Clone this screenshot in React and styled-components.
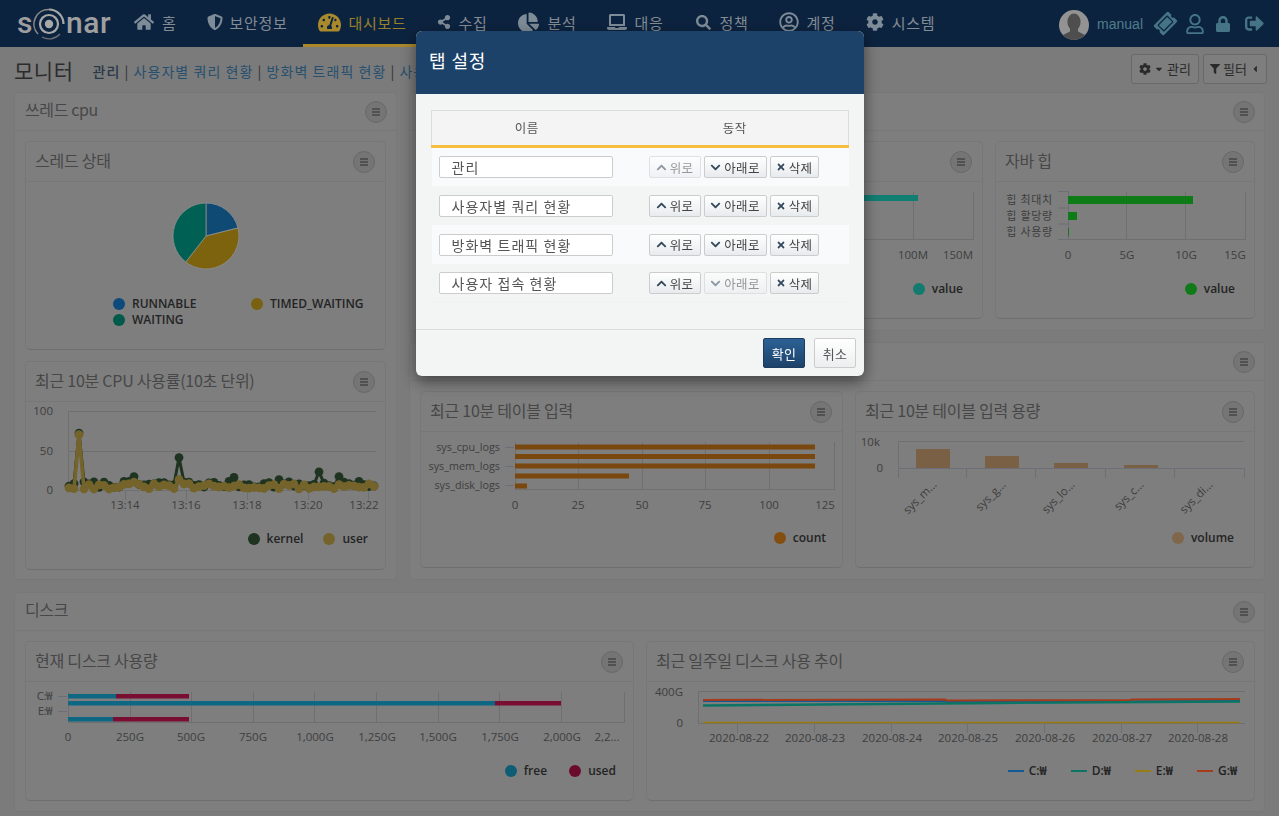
import React from 'react';
import styled, { createGlobalStyle } from 'styled-components';
import {
  FaHome, FaShieldAlt, FaTachometerAlt, FaShareAlt, FaChartPie, FaLaptop, FaSearch,
  FaRegUserCircle, FaCog, FaTicketAlt, FaRegUser, FaLock, FaSignOutAlt, FaFilter,
  FaCaretDown, FaCaretLeft, FaChevronUp, FaChevronDown, FaTimes,
} from 'react-icons/fa';

const ALPHA = 0.25;
// colours are given as they appear under the backdrop
const L = (hex) => {
  const n = parseInt(hex.slice(1), 16);
  const c = [n >> 16, (n >> 8) & 255, n & 255].map((v) => Math.min(255, Math.round(v / (1 - ALPHA))));
  return `rgb(${c[0]},${c[1]},${c[2]})`;
};
const KR = `"Noto Sans CJK KR", "Liberation Sans", sans-serif`;
const LAT = `"Open Sans", "Noto Sans CJK KR", sans-serif`;

const Global = createGlobalStyle`
  html, body { margin: 0; padding: 0; height: 816px; overflow: hidden; background: ${L('#7b7b7b')}; }
  * { box-sizing: border-box; }
  body { font-family: ${KR}; }
`;

const Page = styled.div`width: 1279px; height: 816px; display: flex; flex-direction: column;`;
const Header = styled.header`
  height: 47px; background: ${L('#0d2340')}; display: flex; align-items: stretch; padding-left: 17px; flex: none;
`;
const Logo = styled.div`
  width: 102px; display: flex; align-items: center; font: 500 30px/1 Roboto, sans-serif; color: ${L('#a0a0a0')};
  letter-spacing: .6px; margin-top: -1px;
`;
const Nav = styled.nav`display: flex; align-items: stretch;`;
const NavItem = styled.a`
  display: flex; align-items: center; gap: ${(p) => p.$gap ?? 8}px; padding: 0 15px; height: 47px;
  font-size: 15px; letter-spacing: 0.7px; color: ${(p) => (p.$active ? L('#98802a') : L('#848c94'))};
  border-bottom: 3px solid ${(p) => (p.$active ? L('#ab882a') : 'transparent')};
  svg { color: ${(p) => (p.$active ? L('#a98a2c') : L('#7f8c98'))}; flex: none; margin-left: ${(p) => p.$iconShift ?? 0}px; }
`;
const UserBox = styled.div`
  margin-left: auto; display: flex; align-items: center; padding-right: 15px; color: ${L('#457486')};
`;
const UserName = styled.span`font: 14px "Liberation Sans", sans-serif; margin: 0 12px 0 8px; color: ${L('#517c8c')};`;
const HeadIcon = styled.span`display: flex; margin-left: ${(p) => p.$ml}px;`;

const TitleRow = styled.div`height: 45px; display: flex; align-items: center; padding: 0 12px 0 14px; flex: none;`;
const PageTitle = styled.h1`margin: 0 19px 0 0; font: 400 21px ${KR}; color: ${L('#2c2c2c')}; letter-spacing: .5px;`;
const Tabs = styled.div`font-size: 14px; letter-spacing: 1.05px; color: ${L('#27506e')}; margin-top: 3px; white-space: nowrap;`;
const Sep = styled.span`color: ${L('#333333')};`;
const ActiveTab = styled.span`color: ${L('#2a3a48')}; font-weight: 500;`;
const TopButtons = styled.div`margin-left: auto; display: flex; gap: 4px; margin-top: -2px;`;
const TopButton = styled.button`
  height: 30px; width: ${(p) => p.$w}px; border: 1px solid ${L('#696969')}; border-radius: 3px; background: ${L('#7e7e7e')};
  display: flex; align-items: center; justify-content: center; gap: 3px; color: ${L('#2b2b2b')}; font: 13px ${KR}; padding: 0;
`;

const Content = styled.main`
  display: grid; grid-template-columns: 383px 856px; column-gap: 12px; row-gap: 12px; padding: 0 14px; align-content: start;
`;
const RightStack = styled.div`display: flex; flex-direction: column; gap: 11px;`;
const Section = styled.section`
  height: ${(p) => p.$h}px; background: ${L('#7f7f7f')}; border: 1px solid ${L('#787878')}; border-radius: 4px;
  grid-column: ${(p) => p.$span || 'auto'}; display: flex; flex-direction: column;
`;
const SectionHead = styled.div`
  height: 38px; flex: none; display: flex; justify-content: space-between; padding: 8px 9px 0 10px; border-bottom: 1px solid ${L('#797979')};
`;
const SectionTitle = styled.h2`margin: 0; font: 400 16px/17px ${KR}; color: ${L('#474747')}; letter-spacing: -.4px;`;
const SectionBody = styled.div`
  padding: 10px; display: grid; grid-template-columns: ${(p) => p.$cols}; gap: 11px 12px;
`;
const Card = styled.article`
  height: ${(p) => p.$h}px; background: ${L('#7e7e7e')}; border: 1px solid ${L('#777777')}; border-bottom-color: ${L('#6e6e6e')};
  border-radius: 5px; display: flex; flex-direction: column; overflow: hidden; min-width: 0;
`;
const CardHead = styled.div`
  height: 40px; flex: none; display: flex; justify-content: space-between; padding: 9px 10px 0 9px; border-bottom: 1px solid ${L('#777777')};
`;
const CardTitle = styled.h3`margin: 0; font: 400 16px/19px ${KR}; color: ${L('#474747')}; letter-spacing: -.25px; white-space: nowrap;`;
const MenuBtn = styled.button`
  width: 22px; height: 22px; border-radius: 50%; border: 1px solid ${L('#686868')}; background: ${L('#767676')}; padding: 0;
  display: flex; align-items: center; justify-content: center; flex: none; color: ${L('#2d2d2d')};
`;
const Chart = styled.svg`display: block; flex: none; font-family: ${LAT}; font-size: 11.5px;`;
const Legend = styled.div`
  margin-top: auto; display: flex; justify-content: flex-end; gap: ${(p) => p.$gap ?? 20}px;
  padding: 0 ${(p) => p.$pr ?? 17}px ${(p) => p.$pb ?? 21}px 0;
  font: 600 12px/16px ${LAT}; color: ${L('#242424')};
`;
const PieLegend = styled.div`
  display: grid; grid-template-columns: 138px auto; padding-left: 87px; margin-top: 8px; row-gap: 0;
  font: 600 12px/16px ${LAT}; color: ${L('#242424')};
`;
const LegendItem = styled.span`display: inline-flex; align-items: center; gap: ${(p) => p.$gap ?? 7}px;`;
const Dot = styled.i`width: 12px; height: 12px; border-radius: 50%; background: ${(p) => p.$c}; flex: none;`;
const Dash = styled.i`width: 16px; height: 2px; background: ${(p) => p.$c}; flex: none;`;

const Backdrop = styled.div`position: fixed; inset: 0; background: rgba(0,0,0,${ALPHA}); z-index: 10;`;
const Modal = styled.div`
  position: absolute; left: 416px; top: 31px; width: 448px; height: 345px; background: #f3f5f5; border-radius: 6px; overflow: hidden;
  box-shadow: 0 5px 15px rgba(0,0,0,.5); display: flex; flex-direction: column;
`;
const ModalHead = styled.div`
  height: 63px; flex: none; background: #1d4269; color: #fff; font: 400 18px/58px ${KR}; padding-left: 13px; letter-spacing: .9px;
`;
const ModalBody = styled.div`flex: 1; padding: 16px 15px 0;`;
const Table = styled.table`width: 417px; border-collapse: collapse; table-layout: fixed;`;
const Th = styled.th`
  height: 36px; background: #f4f4f4; border-top: 1px solid #ddd; border-bottom: 3px solid #f7bf40; font: 400 12.5px ${KR}; color: #555; letter-spacing: .6px;
  width: ${(p) => p.$w}px; padding: 0 0 2px;
  &:first-child { border-left: 1px solid #ddd; } &:last-child { border-right: 1px solid #ddd; }
`;
const Tr = styled.tr`
  height: 39px; background: ${(p) => (p.$odd ? '#f9fafc' : 'transparent')};
  &:last-child { border-bottom: 1px solid #f0f2f2; }
`;
const Td = styled.td`padding: 1px 0 0 ${(p) => p.$pl}px;`;
const NameInput = styled.input`
  display: block; width: 174px; height: 22px; border: 1px solid #ccc; border-radius: 2px; background: #fff; padding: 0 0 0 12px; outline: 0;
  font: 400 14px ${KR}; letter-spacing: 1.05px; color: #555;
`;
const ActionRow = styled.div`display: flex; gap: 3px; width: 171px;`;
const Action = styled.button`
  height: 22px; width: ${(p) => p.$w}px; flex: none; border: 1px solid #ccc; border-radius: 2px; background: linear-gradient(#fff, #e8ebee);
  display: flex; align-items: center; justify-content: center; gap: 3px; padding: 0; font: 400 12.5px ${KR}; letter-spacing: .3px; color: #444;
  opacity: ${(p) => (p.disabled ? 0.55 : 1)};
  svg { color: #33475b; }
`;
const ModalFoot = styled.div`
  height: 47px; flex: none; border-top: 1px solid #ddd; display: flex; justify-content: flex-end; gap: 9px; padding: 8px 8px 0 0;
`;
const FootBtn = styled.button`
  width: 42px; height: 30px; border-radius: 2px; padding: 0; font: 400 13px ${KR}; letter-spacing: .4px;
  border: 1px solid ${(p) => (p.$primary ? '#1d3c60' : '#ccc')};
  color: ${(p) => (p.$primary ? '#fff' : '#555')};
  background: ${(p) => (p.$primary ? 'linear-gradient(#2c6195,#1d4269)' : 'linear-gradient(#fff,#eceeef)')};
`;

const Bars = () => (
  <svg width="12" height="12" viewBox="0 0 12 12"><path d="M2 3h8M2 6h8M2 9h8" stroke="currentColor" strokeWidth="1.2" /></svg>
);
const Menu = () => <MenuBtn aria-label="menu"><Bars /></MenuBtn>;

const Box = ({ x, y, w, h, children }) => (
  <Chart width={w} height={h} viewBox={`${x} ${y} ${w} ${h}`}>{children}</Chart>
);
const AX = L('#6c6f76');
const GR = L('#6f6f6f');
const TX = L('#3f3f3f');
const VLines = ({ xs, y1, y2, c = GR }) => xs.map((x) => <line key={x} x1={x + .5} x2={x + .5} y1={y1} y2={y2} stroke={c} />);
const Rect = ({ x1, x2, y, h, c }) => <rect x={x1} y={y} width={x2 - x1} height={h} fill={c} />;
const T = ({ x, y, a = 'middle', children, ...r }) => <text x={x} y={y} textAnchor={a} fill={TX} {...r}>{children}</text>;

const polar = (deg, r = 33, cx = 206, cy = 235) => {
  const t = (deg - 90) * Math.PI / 180;
  return `${(cx + r * Math.cos(t)).toFixed(1)} ${(cy + r * Math.sin(t)).toFixed(1)}`;
};
const Slice = ({ a, b, c }) => (
  <path d={`M206 235L${polar(a)}A33 33 0 ${b - a > 180 ? 1 : 0} 1 ${polar(b)}Z`} fill={c} stroke={L('#8f8f8f')} strokeWidth=".8" />
);

const PieChart = () => (
  <Box x={26} y={181} w={359} h={106}>
    <Slice a={0} b={76} c={L('#0f4a75')} />
    <Slice a={76} b={218} c={L('#7f640f')} />
    <Slice a={218} b={360} c={L('#006053')} />
  </Box>
);

const rng = (s) => () => { s = (s * 1664525 + 1013904223) % 4294967296; return s / 4294967296; };
const series = (seed, base, amp, peaks) => {
  const r = rng(seed);
  return Array.from({ length: 62 }, (_, i) => {
    const x = 69 + i * 5;
    const v = peaks[i] ?? base + r() * amp;
    return [x, +(490 - v * 0.79).toFixed(1)];
  });
};
const KERNEL = series(7, 3, 8, { 1: 8, 2: 72, 13: 17, 23: 10, 22: 41, 33: 16, 50: 23, 54: 17, 42: 13 });
const USER = series(31, 1, 7, { 2: 70, 22: 13, 13: 10 });
const Line = ({ pts, c, r, w }) => (
  <g>
    <polyline points={pts.map((p) => p.join(',')).join(' ')} fill="none" stroke={c} strokeWidth={w} strokeLinejoin="round" />
    {pts.map(([x, y]) => <circle key={x} cx={x} cy={y} r={r} fill={c} />)}
  </g>
);
const CpuChart = () => (
  <Box x={26} y={402} w={359} h={112}>
    <g stroke={GR}>
      <line x1={68} x2={376} y1={411.5} y2={411.5} /><line x1={68} x2={376} y1={451.5} y2={451.5} /><line x1={68} x2={376} y1={490.5} y2={490.5} />
      <line x1={68.5} x2={68.5} y1={411} y2={490} />
    </g>
    <VLines xs={[125, 186, 247, 308, 368]} y1={490} y2={500} c={AX} />
    <T x={53} y={415} a="end">100</T><T x={53} y={455} a="end">50</T><T x={53} y={494} a="end">0</T>
    {[[125, '13:14'], [186, '13:16'], [247, '13:18'], [308, '13:20'], [364, '13:22']].map(([x, l]) => <T key={l} x={x} y={509}>{l}</T>)}
    <Line pts={KERNEL} c={L('#1f3320')} r={4.4} w={3} />
    <Line pts={USER} c={L('#74632a')} r={4.4} w={3.6} />
  </Box>
);

const TableChart = () => (
  <Box x={421} y={432} w={421} h={80}>
    <VLines xs={[515, 578, 642, 705, 769, 834]} y1={442} y2={490} />
    <line x1={515} x2={834} y1={489.5} y2={489.5} stroke={GR} />
    {[[447, 815], [456.5, 815], [466, 815], [476, 629], [486, 527]].map(([y, e]) => (
      <Rect key={y} x1={515} x2={e} y={y - 2.5} h={5} c={L('#7a470e')} />
    ))}
    {[[447, 'sys_cpu_logs'], [466, 'sys_mem_logs'], [485, 'sys_disk_logs']].map(([y, l]) => (
      <g key={l}><T x={500} y={y + 4} a="end" fontSize="10.8">{l}</T><line x1={505} x2={514} y1={y + .5} y2={y + .5} stroke={AX} /></g>
    ))}
    {[[515, '0'], [578, '25'], [642, '50'], [705, '75'], [769, '100'], [825, '125']].map(([x, l]) => <T key={l} x={x} y={509}>{l}</T>)}
  </Box>
);

const VolumeChart = () => (
  <Box x={856} y={432} w={398} h={84}>
    <line x1={898} x2={1244} y1={441.5} y2={441.5} stroke={GR} />
    <line x1={898.5} x2={898.5} y1={441} y2={468} stroke={GR} />
    <line x1={898} x2={1245} y1={468.5} y2={468.5} stroke={AX} />
    <VLines xs={[898, 966, 1035, 1105, 1174, 1244]} y1={468} y2={478} c={AX} />
    {[[916, 449], [985, 456], [1054, 463], [1124, 465]].map(([x, y]) => (
      <rect key={x} x={x} y={y} width={34} height={468 - y} fill={L('#7a6144')} />
    ))}
    <T x={880} y={446} a="end" >10k</T><T x={883} y={472} a="end">0</T>
    {[[936, 'sys_m...'], [1005, 'sys_g...'], [1074, 'sys_lo...'], [1143, 'sys_c...'], [1212, 'sys_di...']].map(([x, l]) => (
      <T key={l} x={x} y={486} a="end" transform={`rotate(-45 ${x} 484)`}>{l}</T>
    ))}
  </Box>
);

const MidChart = () => (
  <Box x={724} y={182} w={258} h={84}>
    <VLines xs={[753, 833, 913, 973]} y1={192} y2={240} />
    <line x1={724} x2={973} y1={239.5} y2={239.5} stroke={GR} />
    <Rect x1={740} x2={918} y={195} h={6} c={L('#117e73')} />
    <T x={913} y={259}>100M</T><T x={958} y={259}>150M</T>
  </Box>
);

const HeapChart = () => (
  <Box x={996} y={182} w={258} h={84}>
    <VLines xs={[1126, 1185, 1245]} y1={192} y2={240} />
    <line x1={1058} x2={1245} y1={239.5} y2={239.5} stroke={GR} />
    <line x1={1068.5} x2={1068.5} y1={191} y2={240} stroke={AX} />
    {[191.5, 208, 224, 239.5].map((y) => <line key={y} x1={1058} x2={1068} y1={y} y2={y} stroke={AX} />)}
    <Rect x1={1068} x2={1193} y={196} h={8} c={L('#107a19')} />
    <Rect x1={1068} x2={1077} y={212} h={8} c={L('#107a19')} />
    <Rect x1={1068} x2={1069} y={228} h={8} c={L('#107a19')} />
    {[[204, '힙 최대치'], [220, '힙 할당량'], [236, '힙 사용량']].map(([y, l]) => (
      <T key={l} x={1053} y={y} a="end" fontFamily={KR} fontSize="11" letterSpacing=".75">{l}</T>
    ))}
    {[[1068, '0'], [1127, '5G'], [1186, '10G'], [1235, '15G']].map(([x, l]) => <T key={l} x={x} y={259}>{l}</T>)}
  </Box>
);

const DiskBar = ({ y, a, b }) => (
  <g><Rect x1={68} x2={a} y={y} h={4.5} c={L('#0e6884')} /><Rect x1={a} x2={b} y={y} h={4.5} c={L('#7a0e32')} /></g>
);
const DiskChart = () => (
  <Box x={26} y={682} w={607} h={62}>
    <VLines xs={[68, 130, 191, 253, 314, 376, 438, 499, 561, 624]} y1={692} y2={723} />
    <line x1={68} x2={625} y1={722.5} y2={722.5} stroke={GR} />
    <DiskBar y={694} a={116} b={189} /><DiskBar y={701} a={495} b={561} /><DiskBar y={717} a={113} b={189} />
    <T x={52} y={700} a="end" letterSpacing="-.5">C:₩</T><T x={52} y={715} a="end" letterSpacing="-.5">E:₩</T>
    <line x1={58} x2={67} y1={696.5} y2={696.5} stroke={AX} /><line x1={58} x2={67} y1={711.5} y2={711.5} stroke={AX} />
    {[[68, '0'], [130, '250G'], [191, '500G'], [253, '750G'], [315, '1,000G'], [377, '1,250G'], [438, '1,500G'], [500, '1,750G'], [562, '2,000G'], [607, '2,2...']].map(([x, l]) => (
      <T key={l} x={x} y={741}>{l}</T>
    ))}
  </Box>
);
const TrendChart = () => (
  <Box x={647} y={682} w={607} h={62}>
    <line x1={698} x2={1245} y1={691.5} y2={691.5} stroke={GR} />
    <line x1={698.5} x2={698.5} y1={691} y2={723} stroke={GR} />
    <line x1={698} x2={1245} y1={723.5} y2={723.5} stroke={GR} />
    <VLines xs={[737, 814, 891, 967, 1044, 1121, 1197]} y1={723} y2={733} c={AX} />
    <T x={683} y={696} a="end">400G</T><T x={683} y={727} a="end">0</T>
    {[[739, '22'], [815, '23'], [892, '24'], [968, '25'], [1045, '26'], [1122, '27'], [1198, '28']].map(([x, d]) => (
      <T key={d} x={x} y={742}>{`2020-08-${d}`}</T>
    ))}
    <polyline points="703,701 945,701 947,702 1240,701" fill="none" stroke={L('#135b95')} strokeWidth="2" />
    <polyline points="703,705.5 1000,703 1240,701.5" fill="none" stroke={L('#0d7465')} strokeWidth="2.4" />
    <polyline points="703,722.5 1240,722.5" fill="none" stroke={L('#987c11')} strokeWidth="1.6" />
    <polyline points="703,700 945,699.5 947,700.5 1130,700 1132,699.5 1240,699" fill="none" stroke={L('#a63b1b')} strokeWidth="2" />
  </Box>
);

const LogoMark = () => (
  <svg width="32" height="32" viewBox="0 0 32 32" style={{ margin: '2px 1px 0 0', flex: 'none' }}>
    <circle cx="16" cy="16" r="4.2" fill={L('#a8a8a8')} />
    <circle cx="16" cy="16" r="9" fill="none" stroke={L('#a8a8a8')} strokeWidth="2.2" />
    <path d="M16 1.5A14.5 14.5 0 0 1 30.5 16" fill="none" stroke={L('#a8a8a8')} strokeWidth="2.2" />
    <path d="M5 26A14.5 14.5 0 0 1 16 1.5" fill="none" stroke={L('#8a8a8a')} strokeWidth="1.6" />
    <path d="M27 26A14.5 14.5 0 0 1 9 29" fill="none" stroke={L('#6a6e72')} strokeWidth="1.4" />
  </svg>
);
const Avatar = () => (
  <svg width="30" height="30" viewBox="0 0 30 30" style={{ marginTop: 2 }}>
    <circle cx="15" cy="15" r="15" fill={L('#949494')} />
    <clipPath id="av"><circle cx="15" cy="15" r="15" /></clipPath>
    <g clipPath="url(#av)" fill={L('#4f4f4f')}>
      <ellipse cx="15" cy="12" rx="6.6" ry="8.4" />
      <path d="M11 18h8v3.5l8 4V30H3v-4.5l8-4z" />
    </g>
  </svg>
);

const NAV = [
  { I: FaHome, s: 20, l: '홈' },
  { I: FaShieldAlt, s: 16, l: '보안정보', gap: 7 },
  { I: FaTachometerAlt, s: 23, l: '대시보드', active: true },
  { I: FaShareAlt, s: 14, l: '수집' },
  { I: FaChartPie, s: 21, l: '분석', gap: 9 },
  { I: FaLaptop, s: 20, l: '대응' },
  { I: FaSearch, s: 15, l: '정책', shift: 2, gap: 9 },
  { I: FaRegUserCircle, s: 20, l: '계정' },
  { I: FaCog, s: 18, l: '시스템' },
];
const ROWS = ['관리', '사용자별 쿼리 현황', '방화벽 트래픽 현황', '사용자 접속 현황'];

export default function App() {
  return (
    <>
      <Global />
      <Page>
        <Header>
          <Logo><span>s</span><LogoMark /><span>nar</span></Logo>
          <Nav>
            {NAV.map(({ I, s, l, active, gap, shift }) => (
              <NavItem key={l} $active={active} $gap={gap} $iconShift={shift}><I size={s} />{l}</NavItem>
            ))}
          </Nav>
          <UserBox>
            <Avatar />
            <UserName>manual</UserName>
            <HeadIcon $ml={0}><FaTicketAlt size={21} style={{ transform: 'rotate(-45deg)' }} /></HeadIcon>
            <HeadIcon $ml={9}><FaRegUser size={20} /></HeadIcon>
            <HeadIcon $ml={10}><FaLock size={16} /></HeadIcon>
            <HeadIcon $ml={14}><FaSignOutAlt size={19} /></HeadIcon>
          </UserBox>
        </Header>
        <TitleRow>
          <PageTitle>모니터</PageTitle>
          <Tabs>
            <ActiveTab>관리</ActiveTab> <Sep>|</Sep> 사용자별 쿼리 현황 <Sep>|</Sep> 방화벽 트래픽 현황 <Sep>|</Sep> 사용자 접속 현황
          </Tabs>
          <TopButtons>
            <TopButton $w={68}><FaCog size={12} /><FaCaretDown size={10} />관리</TopButton>
            <TopButton $w={64}><FaFilter size={10} />필터<FaCaretLeft size={10} /></TopButton>
          </TopButtons>
        </TitleRow>
        <Content>
          <Section $h={488}>
            <SectionHead><SectionTitle>쓰레드 cpu</SectionTitle><Menu /></SectionHead>
            <SectionBody $cols="1fr">
              <Card $h={209}>
                <CardHead><CardTitle>스레드 상태</CardTitle><Menu /></CardHead>
                <PieChart />
                <PieLegend>
                  <LegendItem><Dot $c={L('#0e4a7b')} />RUNNABLE</LegendItem>
                  <LegendItem><Dot $c={L('#796212')} />TIMED_WAITING</LegendItem>
                  <LegendItem><Dot $c={L('#005b4a')} />WAITING</LegendItem>
                </PieLegend>
              </Card>
              <Card $h={209}>
                <CardHead><CardTitle>최근 10분 CPU 사용률(10초 단위)</CardTitle><Menu /></CardHead>
                <CpuChart />
                <Legend $pb={22}>
                  <LegendItem><Dot $c={L('#1f3320')} />kernel</LegendItem>
                  <LegendItem><Dot $c={L('#74632a')} />user</LegendItem>
                </Legend>
              </Card>
            </SectionBody>
          </Section>
          <RightStack>
            <Section $h={239}>
              <SectionHead><SectionTitle>자바 메모리</SectionTitle><Menu /></SectionHead>
              <SectionBody $cols="291px 260px 260px">
                <Card $h={178}><CardHead><CardTitle>메모리</CardTitle><Menu /></CardHead></Card>
                <Card $h={178}>
                  <CardHead><CardTitle>논힙</CardTitle><Menu /></CardHead>
                  <MidChart />
                  <Legend $pr={19}><LegendItem><Dot $c={L('#127a6f')} />value</LegendItem></Legend>
                </Card>
                <Card $h={178}>
                  <CardHead><CardTitle>자바 힙</CardTitle><Menu /></CardHead>
                  <HeapChart />
                  <Legend $pr={19}><LegendItem><Dot $c={L('#117a19')} />value</LegendItem></Legend>
                </Card>
              </SectionBody>
            </Section>
            <Section $h={238}>
              <SectionHead><SectionTitle>테이블</SectionTitle><Menu /></SectionHead>
              <SectionBody $cols="423px 400px">
                <Card $h={177}>
                  <CardHead><CardTitle>최근 10분 테이블 입력</CardTitle><Menu /></CardHead>
                  <TableChart />
                  <Legend $pr={16}><LegendItem><Dot $c={L('#844e10')} />count</LegendItem></Legend>
                </Card>
                <Card $h={177}>
                  <CardHead><CardTitle>최근 10분 테이블 입력 용량</CardTitle><Menu /></CardHead>
                  <VolumeChart />
                  <Legend $pr={20}><LegendItem><Dot $c={L('#80674b')} />volume</LegendItem></Legend>
                </Card>
              </SectionBody>
            </Section>
          </RightStack>
          <Section $h={220} $span="1 / -1">
            <SectionHead><SectionTitle>디스크</SectionTitle><Menu /></SectionHead>
            <SectionBody $cols="609px 609px">
              <Card $h={160}>
                <CardHead><CardTitle>현재 디스크 사용량</CardTitle><Menu /></CardHead>
                <DiskChart />
                <Legend $gap={22}>
                  <LegendItem><Dot $c={L('#0f5e75')} />free</LegendItem>
                  <LegendItem><Dot $c={L('#6c0d2c')} />used</LegendItem>
                </Legend>
              </Card>
              <Card $h={160}>
                <CardHead><CardTitle>최근 일주일 디스크 사용 추이</CardTitle><Menu /></CardHead>
                <TrendChart />
                <Legend $gap={24}>
                  <LegendItem $gap={5}><Dash $c={L('#135b95')} />C:₩</LegendItem>
                  <LegendItem $gap={5}><Dash $c={L('#0d7465')} />D:₩</LegendItem>
                  <LegendItem $gap={5}><Dash $c={L('#987c11')} />E:₩</LegendItem>
                  <LegendItem $gap={5}><Dash $c={L('#a63b1b')} />G:₩</LegendItem>
                </Legend>
              </Card>
            </SectionBody>
          </Section>
        </Content>
      </Page>
      <Backdrop>
        <Modal>
          <ModalHead>탭 설정</ModalHead>
          <ModalBody>
            <Table>
              <thead>
                <tr><Th $w={190}>이름</Th><Th $w={227}>동작</Th></tr>
              </thead>
              <tbody>
                {ROWS.map((r, i) => (
                  <Tr key={r} $odd={i % 2 === 0}>
                    <Td $pl={7}><NameInput readOnly value={r} /></Td>
                    <Td $pl={27}>
                      <ActionRow>
                        <Action $w={52} disabled={i === 0}><FaChevronUp size={11} />위로</Action>
                        <Action $w={63} disabled={i === 3}><FaChevronDown size={11} />아래로</Action>
                        <Action $w={49}><FaTimes size={10} />삭제</Action>
                      </ActionRow>
                    </Td>
                  </Tr>
                ))}
              </tbody>
            </Table>
          </ModalBody>
          <ModalFoot>
            <FootBtn $primary>확인</FootBtn>
            <FootBtn>취소</FootBtn>
          </ModalFoot>
        </Modal>
      </Backdrop>
    </>
  );
}
